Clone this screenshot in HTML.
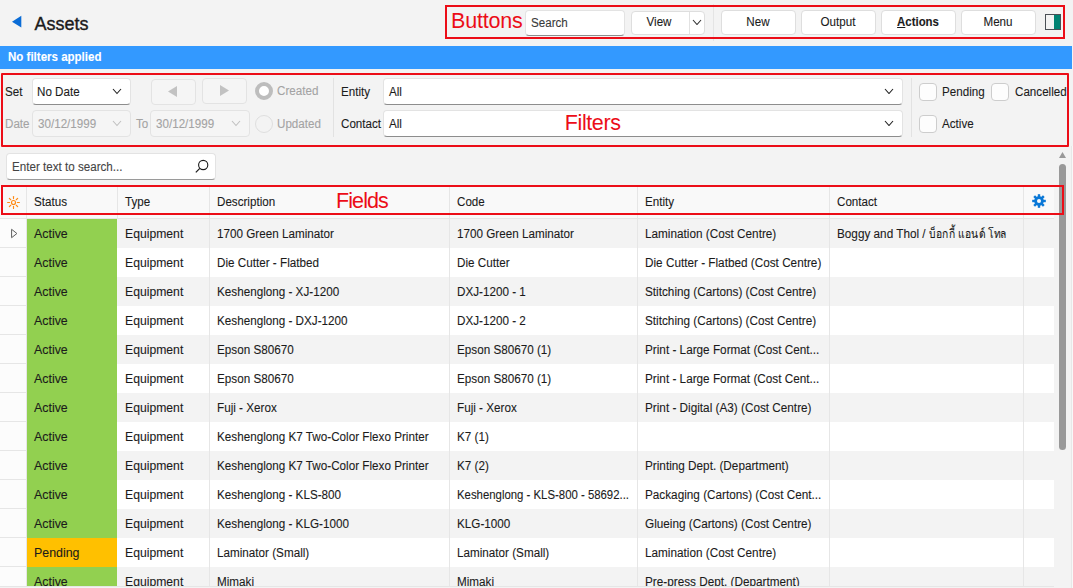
<!DOCTYPE html>
<html><head><meta charset="utf-8"><style>
html,body{margin:0;padding:0;width:1073px;height:588px;overflow:hidden;background:#f3f3f3;font-family:"Liberation Sans",sans-serif;}
.t{position:absolute;white-space:nowrap;-webkit-text-stroke:0.1px currentColor;}
.b{position:absolute;}
</style></head><body>
<svg class="b" style="left:11px;top:15px" width="12" height="14"><polygon points="1,6.8 10.3,0.8 10.3,12.6" fill="#0a6cd6"/></svg>
<div class="t" style="left:34.50px;top:13.70px;font-size:18px;line-height:20.7px;color:#1b1b1b;font-weight:normal;-webkit-text-stroke:0.35px #1b1b1b">Assets</div>
<div class="b" style="left:525px;top:9.5px;width:99.5px;height:26px;background:#fff;border:1px solid #e3e3e3;border-bottom:1px solid #8d8d8d;border-radius:4px;box-sizing:border-box"></div>
<div class="t" style="left:531.00px;top:15.68px;font-size:12.5px;line-height:14.37px;color:#3a3a3a;font-weight:normal;transform:scaleX(0.93);transform-origin:0 0;">Search</div>
<div class="b" style="left:630.5px;top:10.5px;width:74px;height:24px;background:#fff;border:1px solid #dedede;border-radius:4px;box-sizing:border-box"></div>
<div class="b" style="left:689px;top:11.5px;width:1px;height:22px;background:#e2e2e2"></div>
<div class="t" style="left:629.50px;top:14.68px;font-size:12.5px;line-height:14.37px;color:#1b1b1b;font-weight:normal;transform:scaleX(0.93);transform-origin:50% 0;width:58px;text-align:center">View</div>
<svg class="b" style="left:692.0px;top:18.75px" width="10" height="6.5"><polyline points="1,1 5.0,5.5 9,1" fill="none" stroke="#333" stroke-width="1.1"/></svg>
<div class="b" style="left:713px;top:4px;width:1px;height:37px;background:#e4e4e4"></div>
<div class="b" style="left:721px;top:10px;width:74.5px;height:24.5px;background:#fff;border:1px solid #dedede;border-radius:4px;box-sizing:border-box"></div>
<div class="t" style="left:721.00px;top:14.68px;font-size:12.5px;line-height:14.37px;color:#1b1b1b;font-weight:normal;transform:scaleX(0.93);transform-origin:50% 0;width:74px;text-align:center">New</div>
<div class="b" style="left:801px;top:10px;width:74.5px;height:24.5px;background:#fff;border:1px solid #dedede;border-radius:4px;box-sizing:border-box"></div>
<div class="t" style="left:801.00px;top:14.68px;font-size:12.5px;line-height:14.37px;color:#1b1b1b;font-weight:normal;transform:scaleX(0.93);transform-origin:50% 0;width:74px;text-align:center">Output</div>
<div class="b" style="left:881px;top:10px;width:74.5px;height:24.5px;background:#fff;border:1px solid #dedede;border-radius:4px;box-sizing:border-box"></div>
<div class="t" style="left:881.00px;top:16.13px;font-size:12px;line-height:13.8px;color:#1b1b1b;font-weight:bold;transform:scaleX(0.95);transform-origin:50% 0;width:74px;text-align:center"><u>A</u>ctions</div>
<div class="b" style="left:961px;top:10px;width:74.5px;height:24.5px;background:#fff;border:1px solid #dedede;border-radius:4px;box-sizing:border-box"></div>
<div class="t" style="left:961.00px;top:14.68px;font-size:12.5px;line-height:14.37px;color:#1b1b1b;font-weight:normal;transform:scaleX(0.93);transform-origin:50% 0;width:74px;text-align:center">Menu</div>
<div class="b" style="left:1045px;top:14px;width:16px;height:16px;border:1px solid #4a4f55;box-sizing:border-box;background:linear-gradient(90deg,#f3f3f3 0,#f3f3f3 8px,#008272 8px)"></div>
<div class="b" style="left:0px;top:46px;width:1072px;height:23px;background:#3399ff"></div>
<div class="t" style="left:7.50px;top:51.13px;font-size:12px;line-height:13.8px;color:#fff;font-weight:bold;transform:scaleX(0.96);transform-origin:0 0;">No filters applied</div>
<div class="t" style="left:5.00px;top:84.68px;font-size:12.5px;line-height:14.37px;color:#1b1b1b;font-weight:normal;transform:scaleX(0.93);transform-origin:0 0;">Set</div>
<div class="b" style="left:31.5px;top:78px;width:99px;height:26.5px;background:#fff;border:1px solid #e3e3e3;border-bottom:1px solid #8d8d8d;border-radius:4px;box-sizing:border-box"></div>
<div class="t" style="left:36.50px;top:84.68px;font-size:12.5px;line-height:14.37px;color:#1b1b1b;font-weight:normal;transform:scaleX(0.93);transform-origin:0 0;">No Date</div>
<svg class="b" style="left:112.0px;top:88.25px" width="10" height="6.5"><polyline points="1,1 5.0,5.5 9,1" fill="none" stroke="#222" stroke-width="1.1"/></svg>
<div class="b" style="left:151px;top:79px;width:45px;height:25.8px;background:#f5f5f5;border:1px solid #e3e3e3;border-radius:4px;box-sizing:border-box"></div>
<div class="b" style="left:202px;top:78px;width:45px;height:25.8px;background:#f5f5f5;border:1px solid #e3e3e3;border-radius:4px;box-sizing:border-box"></div>
<svg class="b" style="left:167px;top:85px" width="11" height="13"><polygon points="1,6.5 10,1 10,12" fill="#c2c2c2"/></svg>
<svg class="b" style="left:219px;top:84px" width="11" height="13"><polygon points="10,6.5 1,1 1,12" fill="#c2c2c2"/></svg>
<svg class="b" style="left:255px;top:82px" width="18" height="18"><circle cx="9" cy="9" r="7" fill="#fff" stroke="#bdbdbd" stroke-width="4"/></svg>
<div class="t" style="left:277.30px;top:84.18px;font-size:12.5px;line-height:14.37px;color:#a3a3a3;font-weight:normal;transform:scaleX(0.93);transform-origin:0 0;">Created</div>
<svg class="b" style="left:255px;top:115px" width="18" height="18"><circle cx="9" cy="9" r="8.5" fill="#f3f3f3" stroke="#dedede" stroke-width="1"/></svg>
<div class="t" style="left:277.30px;top:116.68px;font-size:12.5px;line-height:14.37px;color:#a3a3a3;font-weight:normal;transform:scaleX(0.93);transform-origin:0 0;">Updated</div>
<div class="t" style="left:5.00px;top:116.68px;font-size:12.5px;line-height:14.37px;color:#a3a3a3;font-weight:normal;transform:scaleX(0.93);transform-origin:0 0;">Date</div>
<div class="b" style="left:31.5px;top:110px;width:99px;height:26.5px;background:#f5f5f5;border:1px solid #e3e3e3;border-radius:4px;box-sizing:border-box"></div>
<div class="t" style="left:37.50px;top:116.68px;font-size:12.5px;line-height:14.37px;color:#a3a3a3;font-weight:normal;transform:scaleX(0.93);transform-origin:0 0;">30/12/1999</div>
<svg class="b" style="left:112.0px;top:120.25px" width="10" height="6.5"><polyline points="1,1 5.0,5.5 9,1" fill="none" stroke="#c0c0c0" stroke-width="1.1"/></svg>
<div class="t" style="left:135.50px;top:116.68px;font-size:12.5px;line-height:14.37px;color:#a3a3a3;font-weight:normal;transform:scaleX(0.93);transform-origin:0 0;">To</div>
<div class="b" style="left:150px;top:110px;width:100px;height:26.5px;background:#f5f5f5;border:1px solid #e3e3e3;border-radius:4px;box-sizing:border-box"></div>
<div class="t" style="left:156.00px;top:116.68px;font-size:12.5px;line-height:14.37px;color:#a3a3a3;font-weight:normal;transform:scaleX(0.93);transform-origin:0 0;">30/12/1999</div>
<svg class="b" style="left:231.0px;top:120.25px" width="10" height="6.5"><polyline points="1,1 5.0,5.5 9,1" fill="none" stroke="#c0c0c0" stroke-width="1.1"/></svg>
<div class="b" style="left:333px;top:78px;width:1px;height:59px;background:#e2e2e2"></div>
<div class="b" style="left:911px;top:78px;width:1px;height:59px;background:#e2e2e2"></div>
<div class="t" style="left:341.00px;top:84.68px;font-size:12.5px;line-height:14.37px;color:#1b1b1b;font-weight:normal;transform:scaleX(0.93);transform-origin:0 0;">Entity</div>
<div class="t" style="left:341.00px;top:116.68px;font-size:12.5px;line-height:14.37px;color:#1b1b1b;font-weight:normal;transform:scaleX(0.93);transform-origin:0 0;">Contact</div>
<div class="b" style="left:382.5px;top:78px;width:520px;height:26.5px;background:#fff;border:1px solid #e3e3e3;border-bottom:1px solid #8d8d8d;border-radius:4px;box-sizing:border-box"></div>
<div class="b" style="left:382.5px;top:110px;width:520px;height:26.5px;background:#fff;border:1px solid #e3e3e3;border-bottom:1px solid #8d8d8d;border-radius:4px;box-sizing:border-box"></div>
<div class="t" style="left:389.00px;top:84.68px;font-size:12.5px;line-height:14.37px;color:#1b1b1b;font-weight:normal;transform:scaleX(0.93);transform-origin:0 0;">All</div>
<div class="t" style="left:389.00px;top:116.68px;font-size:12.5px;line-height:14.37px;color:#1b1b1b;font-weight:normal;transform:scaleX(0.93);transform-origin:0 0;">All</div>
<svg class="b" style="left:884.0px;top:87.75px" width="10" height="6.5"><polyline points="1,1 5.0,5.5 9,1" fill="none" stroke="#222" stroke-width="1.1"/></svg>
<svg class="b" style="left:884.0px;top:119.75px" width="10" height="6.5"><polyline points="1,1 5.0,5.5 9,1" fill="none" stroke="#222" stroke-width="1.1"/></svg>
<div class="b" style="left:919px;top:83px;width:18px;height:17.6px;background:#fdfdfd;border:1px solid #cdcdcd;border-radius:4px;box-sizing:border-box"></div>
<div class="t" style="left:942.00px;top:84.68px;font-size:12.5px;line-height:14.37px;color:#1b1b1b;font-weight:normal;transform:scaleX(0.93);transform-origin:0 0;">Pending</div>
<div class="b" style="left:991px;top:83px;width:18px;height:17.6px;background:#fdfdfd;border:1px solid #cdcdcd;border-radius:4px;box-sizing:border-box"></div>
<div class="t" style="left:1014.50px;top:84.68px;font-size:12.5px;line-height:14.37px;color:#1b1b1b;font-weight:normal;transform:scaleX(0.93);transform-origin:0 0;">Cancelled</div>
<div class="b" style="left:919px;top:115px;width:18px;height:17.6px;background:#fdfdfd;border:1px solid #cdcdcd;border-radius:4px;box-sizing:border-box"></div>
<div class="t" style="left:942.00px;top:116.68px;font-size:12.5px;line-height:14.37px;color:#1b1b1b;font-weight:normal;transform:scaleX(0.93);transform-origin:0 0;">Active</div>
<div class="b" style="left:6px;top:153px;width:209.5px;height:27px;background:#fff;border:1px solid #e3e3e3;border-bottom:1px solid #9a9a9a;border-radius:4px;box-sizing:border-box"></div>
<div class="t" style="left:12.00px;top:159.68px;font-size:12.5px;line-height:14.37px;color:#444;font-weight:normal;transform:scaleX(0.93);transform-origin:0 0;">Enter text to search...</div>
<svg class="b" style="left:194px;top:159px" width="16" height="15"><circle cx="9.2" cy="6" r="4.6" fill="none" stroke="#1a1a1a" stroke-width="1.1"/><line x1="5.8" y1="9.4" x2="1.8" y2="13.4" stroke="#1a1a1a" stroke-width="1.2"/></svg>
<div class="b" style="left:0px;top:186px;width:1054px;height:32px;background:#f9f9f9"></div>
<div class="b" style="left:0px;top:218px;width:1054px;height:1px;background:#e6e6e6"></div>
<div class="b" style="left:26px;top:186px;width:1px;height:32px;background:#e6e6e6"></div>
<div class="b" style="left:117px;top:186px;width:1px;height:32px;background:#e6e6e6"></div>
<div class="b" style="left:209px;top:186px;width:1px;height:32px;background:#e6e6e6"></div>
<div class="b" style="left:449px;top:186px;width:1px;height:32px;background:#e6e6e6"></div>
<div class="b" style="left:637px;top:186px;width:1px;height:32px;background:#e6e6e6"></div>
<div class="b" style="left:829px;top:186px;width:1px;height:32px;background:#e6e6e6"></div>
<div class="b" style="left:1023px;top:186px;width:1px;height:32px;background:#e6e6e6"></div>
<div class="t" style="left:34.00px;top:194.68px;font-size:12.5px;line-height:14.37px;color:#1b1b1b;font-weight:normal;transform:scaleX(0.93);transform-origin:0 0;">Status</div>
<div class="t" style="left:125.00px;top:194.68px;font-size:12.5px;line-height:14.37px;color:#1b1b1b;font-weight:normal;transform:scaleX(0.93);transform-origin:0 0;">Type</div>
<div class="t" style="left:217.00px;top:194.68px;font-size:12.5px;line-height:14.37px;color:#1b1b1b;font-weight:normal;transform:scaleX(0.93);transform-origin:0 0;">Description</div>
<div class="t" style="left:457.00px;top:194.68px;font-size:12.5px;line-height:14.37px;color:#1b1b1b;font-weight:normal;transform:scaleX(0.93);transform-origin:0 0;">Code</div>
<div class="t" style="left:645.00px;top:194.68px;font-size:12.5px;line-height:14.37px;color:#1b1b1b;font-weight:normal;transform:scaleX(0.93);transform-origin:0 0;">Entity</div>
<div class="t" style="left:837.00px;top:194.68px;font-size:12.5px;line-height:14.37px;color:#1b1b1b;font-weight:normal;transform:scaleX(0.93);transform-origin:0 0;">Contact</div>
<svg class="b" style="left:6px;top:195px" width="15" height="15"><circle cx="7.5" cy="7.5" r="2" fill="none" stroke="#ff8a14" stroke-width="1.15"/><line x1="11.40" y1="7.50" x2="13.40" y2="7.50" stroke="#ff8a14" stroke-width="1.15" stroke-linecap="round"/><line x1="10.26" y1="10.26" x2="11.67" y2="11.67" stroke="#ff8a14" stroke-width="1.15" stroke-linecap="round"/><line x1="7.50" y1="11.40" x2="7.50" y2="13.40" stroke="#ff8a14" stroke-width="1.15" stroke-linecap="round"/><line x1="4.74" y1="10.26" x2="3.33" y2="11.67" stroke="#ff8a14" stroke-width="1.15" stroke-linecap="round"/><line x1="3.60" y1="7.50" x2="1.60" y2="7.50" stroke="#ff8a14" stroke-width="1.15" stroke-linecap="round"/><line x1="4.74" y1="4.74" x2="3.33" y2="3.33" stroke="#ff8a14" stroke-width="1.15" stroke-linecap="round"/><line x1="7.50" y1="3.60" x2="7.50" y2="1.60" stroke="#ff8a14" stroke-width="1.15" stroke-linecap="round"/><line x1="10.26" y1="4.74" x2="11.67" y2="3.33" stroke="#ff8a14" stroke-width="1.15" stroke-linecap="round"/></svg>
<svg class="b" style="left:1032px;top:194px" width="14" height="14"><circle cx="7" cy="7" r="4.8" fill="#0a78d7"/><rect x="5.8" y="0.2" width="2.4" height="3.5" fill="#0a78d7" transform="rotate(0 7 7)"/><rect x="5.8" y="0.2" width="2.4" height="3.5" fill="#0a78d7" transform="rotate(45 7 7)"/><rect x="5.8" y="0.2" width="2.4" height="3.5" fill="#0a78d7" transform="rotate(90 7 7)"/><rect x="5.8" y="0.2" width="2.4" height="3.5" fill="#0a78d7" transform="rotate(135 7 7)"/><rect x="5.8" y="0.2" width="2.4" height="3.5" fill="#0a78d7" transform="rotate(180 7 7)"/><rect x="5.8" y="0.2" width="2.4" height="3.5" fill="#0a78d7" transform="rotate(225 7 7)"/><rect x="5.8" y="0.2" width="2.4" height="3.5" fill="#0a78d7" transform="rotate(270 7 7)"/><rect x="5.8" y="0.2" width="2.4" height="3.5" fill="#0a78d7" transform="rotate(315 7 7)"/><circle cx="7" cy="7" r="2" fill="#f9f9f9"/></svg>
<div class="b" style="left:0;top:219px;width:1073px;height:367px;overflow:hidden">
<div class="b" style="left:0px;top:0px;width:26px;height:29px;background:#fcfcfc"></div>
<div class="b" style="left:0px;top:28px;width:26px;height:1px;background:#e6e6e6"></div>
<div class="b" style="left:27px;top:0px;width:90px;height:29px;background:#92d050"></div>
<div class="t" style="left:34.00px;top:7.68px;font-size:12.5px;line-height:14.37px;color:#1b1b1b;font-weight:normal;transform:scaleX(0.99);transform-origin:0 0;">Active</div>
<div class="t" style="left:125.00px;top:7.68px;font-size:12.5px;line-height:14.37px;color:#1b1b1b;font-weight:normal;transform:scaleX(0.975);transform-origin:0 0;">Equipment</div>
<div class="t" style="left:217.00px;top:7.68px;font-size:12.5px;line-height:14.37px;color:#1b1b1b;font-weight:normal;transform:scaleX(0.935);transform-origin:0 0;">1700 Green Laminator</div>
<div class="t" style="left:457.00px;top:7.68px;font-size:12.5px;line-height:14.37px;color:#1b1b1b;font-weight:normal;transform:scaleX(0.935);transform-origin:0 0;">1700 Green Laminator</div>
<div class="t" style="left:645.00px;top:7.68px;font-size:12.5px;line-height:14.37px;color:#1b1b1b;font-weight:normal;transform:scaleX(0.94);transform-origin:0 0;">Lamination (Cost Centre)</div>
<div class="t" style="left:837.00px;top:7.68px;font-size:12.5px;line-height:14.37px;color:#1b1b1b;font-weight:normal;transform:scaleX(0.94);transform-origin:0 0;">Boggy and Thol /</div>
<div class="b" style="left:27px;top:29px;width:1027px;height:29px;background:#fff"></div>
<div class="b" style="left:0px;top:29px;width:26px;height:29px;background:#fcfcfc"></div>
<div class="b" style="left:0px;top:57px;width:26px;height:1px;background:#e6e6e6"></div>
<div class="b" style="left:27px;top:29px;width:90px;height:29px;background:#92d050"></div>
<div class="t" style="left:34.00px;top:36.68px;font-size:12.5px;line-height:14.37px;color:#1b1b1b;font-weight:normal;transform:scaleX(0.99);transform-origin:0 0;">Active</div>
<div class="t" style="left:125.00px;top:36.68px;font-size:12.5px;line-height:14.37px;color:#1b1b1b;font-weight:normal;transform:scaleX(0.975);transform-origin:0 0;">Equipment</div>
<div class="t" style="left:217.00px;top:36.68px;font-size:12.5px;line-height:14.37px;color:#1b1b1b;font-weight:normal;transform:scaleX(0.935);transform-origin:0 0;">Die Cutter - Flatbed</div>
<div class="t" style="left:457.00px;top:36.68px;font-size:12.5px;line-height:14.37px;color:#1b1b1b;font-weight:normal;transform:scaleX(0.935);transform-origin:0 0;">Die Cutter</div>
<div class="t" style="left:645.00px;top:36.68px;font-size:12.5px;line-height:14.37px;color:#1b1b1b;font-weight:normal;transform:scaleX(0.94);transform-origin:0 0;">Die Cutter - Flatbed (Cost Centre)</div>
<div class="b" style="left:0px;top:58px;width:26px;height:29px;background:#fcfcfc"></div>
<div class="b" style="left:0px;top:86px;width:26px;height:1px;background:#e6e6e6"></div>
<div class="b" style="left:27px;top:58px;width:90px;height:29px;background:#92d050"></div>
<div class="t" style="left:34.00px;top:65.68px;font-size:12.5px;line-height:14.37px;color:#1b1b1b;font-weight:normal;transform:scaleX(0.99);transform-origin:0 0;">Active</div>
<div class="t" style="left:125.00px;top:65.68px;font-size:12.5px;line-height:14.37px;color:#1b1b1b;font-weight:normal;transform:scaleX(0.975);transform-origin:0 0;">Equipment</div>
<div class="t" style="left:217.00px;top:65.68px;font-size:12.5px;line-height:14.37px;color:#1b1b1b;font-weight:normal;transform:scaleX(0.935);transform-origin:0 0;">Keshenglong - XJ-1200</div>
<div class="t" style="left:457.00px;top:65.68px;font-size:12.5px;line-height:14.37px;color:#1b1b1b;font-weight:normal;transform:scaleX(0.935);transform-origin:0 0;">DXJ-1200 - 1</div>
<div class="t" style="left:645.00px;top:65.68px;font-size:12.5px;line-height:14.37px;color:#1b1b1b;font-weight:normal;transform:scaleX(0.94);transform-origin:0 0;">Stitching (Cartons) (Cost Centre)</div>
<div class="b" style="left:27px;top:87px;width:1027px;height:29px;background:#fff"></div>
<div class="b" style="left:0px;top:87px;width:26px;height:29px;background:#fcfcfc"></div>
<div class="b" style="left:0px;top:115px;width:26px;height:1px;background:#e6e6e6"></div>
<div class="b" style="left:27px;top:87px;width:90px;height:29px;background:#92d050"></div>
<div class="t" style="left:34.00px;top:94.68px;font-size:12.5px;line-height:14.37px;color:#1b1b1b;font-weight:normal;transform:scaleX(0.99);transform-origin:0 0;">Active</div>
<div class="t" style="left:125.00px;top:94.68px;font-size:12.5px;line-height:14.37px;color:#1b1b1b;font-weight:normal;transform:scaleX(0.975);transform-origin:0 0;">Equipment</div>
<div class="t" style="left:217.00px;top:94.68px;font-size:12.5px;line-height:14.37px;color:#1b1b1b;font-weight:normal;transform:scaleX(0.935);transform-origin:0 0;">Keshenglong - DXJ-1200</div>
<div class="t" style="left:457.00px;top:94.68px;font-size:12.5px;line-height:14.37px;color:#1b1b1b;font-weight:normal;transform:scaleX(0.935);transform-origin:0 0;">DXJ-1200 - 2</div>
<div class="t" style="left:645.00px;top:94.68px;font-size:12.5px;line-height:14.37px;color:#1b1b1b;font-weight:normal;transform:scaleX(0.94);transform-origin:0 0;">Stitching (Cartons) (Cost Centre)</div>
<div class="b" style="left:0px;top:116px;width:26px;height:29px;background:#fcfcfc"></div>
<div class="b" style="left:0px;top:144px;width:26px;height:1px;background:#e6e6e6"></div>
<div class="b" style="left:27px;top:116px;width:90px;height:29px;background:#92d050"></div>
<div class="t" style="left:34.00px;top:123.68px;font-size:12.5px;line-height:14.37px;color:#1b1b1b;font-weight:normal;transform:scaleX(0.99);transform-origin:0 0;">Active</div>
<div class="t" style="left:125.00px;top:123.68px;font-size:12.5px;line-height:14.37px;color:#1b1b1b;font-weight:normal;transform:scaleX(0.975);transform-origin:0 0;">Equipment</div>
<div class="t" style="left:217.00px;top:123.68px;font-size:12.5px;line-height:14.37px;color:#1b1b1b;font-weight:normal;transform:scaleX(0.935);transform-origin:0 0;">Epson S80670</div>
<div class="t" style="left:457.00px;top:123.68px;font-size:12.5px;line-height:14.37px;color:#1b1b1b;font-weight:normal;transform:scaleX(0.935);transform-origin:0 0;">Epson S80670 (1)</div>
<div class="t" style="left:645.00px;top:123.68px;font-size:12.5px;line-height:14.37px;color:#1b1b1b;font-weight:normal;transform:scaleX(0.94);transform-origin:0 0;">Print - Large Format (Cost Cent...</div>
<div class="b" style="left:27px;top:145px;width:1027px;height:29px;background:#fff"></div>
<div class="b" style="left:0px;top:145px;width:26px;height:29px;background:#fcfcfc"></div>
<div class="b" style="left:0px;top:173px;width:26px;height:1px;background:#e6e6e6"></div>
<div class="b" style="left:27px;top:145px;width:90px;height:29px;background:#92d050"></div>
<div class="t" style="left:34.00px;top:152.68px;font-size:12.5px;line-height:14.37px;color:#1b1b1b;font-weight:normal;transform:scaleX(0.99);transform-origin:0 0;">Active</div>
<div class="t" style="left:125.00px;top:152.68px;font-size:12.5px;line-height:14.37px;color:#1b1b1b;font-weight:normal;transform:scaleX(0.975);transform-origin:0 0;">Equipment</div>
<div class="t" style="left:217.00px;top:152.68px;font-size:12.5px;line-height:14.37px;color:#1b1b1b;font-weight:normal;transform:scaleX(0.935);transform-origin:0 0;">Epson S80670</div>
<div class="t" style="left:457.00px;top:152.68px;font-size:12.5px;line-height:14.37px;color:#1b1b1b;font-weight:normal;transform:scaleX(0.935);transform-origin:0 0;">Epson S80670 (1)</div>
<div class="t" style="left:645.00px;top:152.68px;font-size:12.5px;line-height:14.37px;color:#1b1b1b;font-weight:normal;transform:scaleX(0.94);transform-origin:0 0;">Print - Large Format (Cost Cent...</div>
<div class="b" style="left:0px;top:174px;width:26px;height:29px;background:#fcfcfc"></div>
<div class="b" style="left:0px;top:202px;width:26px;height:1px;background:#e6e6e6"></div>
<div class="b" style="left:27px;top:174px;width:90px;height:29px;background:#92d050"></div>
<div class="t" style="left:34.00px;top:181.68px;font-size:12.5px;line-height:14.37px;color:#1b1b1b;font-weight:normal;transform:scaleX(0.99);transform-origin:0 0;">Active</div>
<div class="t" style="left:125.00px;top:181.68px;font-size:12.5px;line-height:14.37px;color:#1b1b1b;font-weight:normal;transform:scaleX(0.975);transform-origin:0 0;">Equipment</div>
<div class="t" style="left:217.00px;top:181.68px;font-size:12.5px;line-height:14.37px;color:#1b1b1b;font-weight:normal;transform:scaleX(0.935);transform-origin:0 0;">Fuji - Xerox</div>
<div class="t" style="left:457.00px;top:181.68px;font-size:12.5px;line-height:14.37px;color:#1b1b1b;font-weight:normal;transform:scaleX(0.935);transform-origin:0 0;">Fuji - Xerox</div>
<div class="t" style="left:645.00px;top:181.68px;font-size:12.5px;line-height:14.37px;color:#1b1b1b;font-weight:normal;transform:scaleX(0.94);transform-origin:0 0;">Print - Digital (A3) (Cost Centre)</div>
<div class="b" style="left:27px;top:203px;width:1027px;height:29px;background:#fff"></div>
<div class="b" style="left:0px;top:203px;width:26px;height:29px;background:#fcfcfc"></div>
<div class="b" style="left:0px;top:231px;width:26px;height:1px;background:#e6e6e6"></div>
<div class="b" style="left:27px;top:203px;width:90px;height:29px;background:#92d050"></div>
<div class="t" style="left:34.00px;top:210.68px;font-size:12.5px;line-height:14.37px;color:#1b1b1b;font-weight:normal;transform:scaleX(0.99);transform-origin:0 0;">Active</div>
<div class="t" style="left:125.00px;top:210.68px;font-size:12.5px;line-height:14.37px;color:#1b1b1b;font-weight:normal;transform:scaleX(0.975);transform-origin:0 0;">Equipment</div>
<div class="t" style="left:217.00px;top:210.68px;font-size:12.5px;line-height:14.37px;color:#1b1b1b;font-weight:normal;transform:scaleX(0.935);transform-origin:0 0;">Keshenglong K7 Two-Color Flexo Printer</div>
<div class="t" style="left:457.00px;top:210.68px;font-size:12.5px;line-height:14.37px;color:#1b1b1b;font-weight:normal;transform:scaleX(0.935);transform-origin:0 0;">K7 (1)</div>
<div class="b" style="left:0px;top:232px;width:26px;height:29px;background:#fcfcfc"></div>
<div class="b" style="left:0px;top:260px;width:26px;height:1px;background:#e6e6e6"></div>
<div class="b" style="left:27px;top:232px;width:90px;height:29px;background:#92d050"></div>
<div class="t" style="left:34.00px;top:239.68px;font-size:12.5px;line-height:14.37px;color:#1b1b1b;font-weight:normal;transform:scaleX(0.99);transform-origin:0 0;">Active</div>
<div class="t" style="left:125.00px;top:239.68px;font-size:12.5px;line-height:14.37px;color:#1b1b1b;font-weight:normal;transform:scaleX(0.975);transform-origin:0 0;">Equipment</div>
<div class="t" style="left:217.00px;top:239.68px;font-size:12.5px;line-height:14.37px;color:#1b1b1b;font-weight:normal;transform:scaleX(0.935);transform-origin:0 0;">Keshenglong K7 Two-Color Flexo Printer</div>
<div class="t" style="left:457.00px;top:239.68px;font-size:12.5px;line-height:14.37px;color:#1b1b1b;font-weight:normal;transform:scaleX(0.935);transform-origin:0 0;">K7 (2)</div>
<div class="t" style="left:645.00px;top:239.68px;font-size:12.5px;line-height:14.37px;color:#1b1b1b;font-weight:normal;transform:scaleX(0.94);transform-origin:0 0;">Printing Dept. (Department)</div>
<div class="b" style="left:27px;top:261px;width:1027px;height:29px;background:#fff"></div>
<div class="b" style="left:0px;top:261px;width:26px;height:29px;background:#fcfcfc"></div>
<div class="b" style="left:0px;top:289px;width:26px;height:1px;background:#e6e6e6"></div>
<div class="b" style="left:27px;top:261px;width:90px;height:29px;background:#92d050"></div>
<div class="t" style="left:34.00px;top:268.68px;font-size:12.5px;line-height:14.37px;color:#1b1b1b;font-weight:normal;transform:scaleX(0.99);transform-origin:0 0;">Active</div>
<div class="t" style="left:125.00px;top:268.68px;font-size:12.5px;line-height:14.37px;color:#1b1b1b;font-weight:normal;transform:scaleX(0.975);transform-origin:0 0;">Equipment</div>
<div class="t" style="left:217.00px;top:268.68px;font-size:12.5px;line-height:14.37px;color:#1b1b1b;font-weight:normal;transform:scaleX(0.935);transform-origin:0 0;">Keshenglong - KLS-800</div>
<div class="t" style="left:457.00px;top:268.68px;font-size:12.5px;line-height:14.37px;color:#1b1b1b;font-weight:normal;transform:scaleX(0.91);transform-origin:0 0;">Keshenglong - KLS-800 - 58692...</div>
<div class="t" style="left:645.00px;top:268.68px;font-size:12.5px;line-height:14.37px;color:#1b1b1b;font-weight:normal;transform:scaleX(0.94);transform-origin:0 0;">Packaging (Cartons) (Cost Cent...</div>
<div class="b" style="left:0px;top:290px;width:26px;height:29px;background:#fcfcfc"></div>
<div class="b" style="left:0px;top:318px;width:26px;height:1px;background:#e6e6e6"></div>
<div class="b" style="left:27px;top:290px;width:90px;height:29px;background:#92d050"></div>
<div class="t" style="left:34.00px;top:297.68px;font-size:12.5px;line-height:14.37px;color:#1b1b1b;font-weight:normal;transform:scaleX(0.99);transform-origin:0 0;">Active</div>
<div class="t" style="left:125.00px;top:297.68px;font-size:12.5px;line-height:14.37px;color:#1b1b1b;font-weight:normal;transform:scaleX(0.975);transform-origin:0 0;">Equipment</div>
<div class="t" style="left:217.00px;top:297.68px;font-size:12.5px;line-height:14.37px;color:#1b1b1b;font-weight:normal;transform:scaleX(0.935);transform-origin:0 0;">Keshenglong - KLG-1000</div>
<div class="t" style="left:457.00px;top:297.68px;font-size:12.5px;line-height:14.37px;color:#1b1b1b;font-weight:normal;transform:scaleX(0.935);transform-origin:0 0;">KLG-1000</div>
<div class="t" style="left:645.00px;top:297.68px;font-size:12.5px;line-height:14.37px;color:#1b1b1b;font-weight:normal;transform:scaleX(0.94);transform-origin:0 0;">Glueing (Cartons) (Cost Centre)</div>
<div class="b" style="left:27px;top:319px;width:1027px;height:29px;background:#fff"></div>
<div class="b" style="left:0px;top:319px;width:26px;height:29px;background:#fcfcfc"></div>
<div class="b" style="left:0px;top:347px;width:26px;height:1px;background:#e6e6e6"></div>
<div class="b" style="left:27px;top:319px;width:90px;height:29px;background:#ffc000"></div>
<div class="t" style="left:34.00px;top:326.68px;font-size:12.5px;line-height:14.37px;color:#1b1b1b;font-weight:normal;transform:scaleX(0.99);transform-origin:0 0;">Pending</div>
<div class="t" style="left:125.00px;top:326.68px;font-size:12.5px;line-height:14.37px;color:#1b1b1b;font-weight:normal;transform:scaleX(0.975);transform-origin:0 0;">Equipment</div>
<div class="t" style="left:217.00px;top:326.68px;font-size:12.5px;line-height:14.37px;color:#1b1b1b;font-weight:normal;transform:scaleX(0.935);transform-origin:0 0;">Laminator (Small)</div>
<div class="t" style="left:457.00px;top:326.68px;font-size:12.5px;line-height:14.37px;color:#1b1b1b;font-weight:normal;transform:scaleX(0.935);transform-origin:0 0;">Laminator (Small)</div>
<div class="t" style="left:645.00px;top:326.68px;font-size:12.5px;line-height:14.37px;color:#1b1b1b;font-weight:normal;transform:scaleX(0.94);transform-origin:0 0;">Lamination (Cost Centre)</div>
<div class="b" style="left:0px;top:348px;width:26px;height:29px;background:#fcfcfc"></div>
<div class="b" style="left:0px;top:376px;width:26px;height:1px;background:#e6e6e6"></div>
<div class="b" style="left:27px;top:348px;width:90px;height:29px;background:#92d050"></div>
<div class="t" style="left:34.00px;top:355.68px;font-size:12.5px;line-height:14.37px;color:#1b1b1b;font-weight:normal;transform:scaleX(0.99);transform-origin:0 0;">Active</div>
<div class="t" style="left:125.00px;top:355.68px;font-size:12.5px;line-height:14.37px;color:#1b1b1b;font-weight:normal;transform:scaleX(0.975);transform-origin:0 0;">Equipment</div>
<div class="t" style="left:217.00px;top:355.68px;font-size:12.5px;line-height:14.37px;color:#1b1b1b;font-weight:normal;transform:scaleX(0.935);transform-origin:0 0;">Mimaki</div>
<div class="t" style="left:457.00px;top:355.68px;font-size:12.5px;line-height:14.37px;color:#1b1b1b;font-weight:normal;transform:scaleX(0.935);transform-origin:0 0;">Mimaki</div>
<div class="t" style="left:645.00px;top:355.68px;font-size:12.5px;line-height:14.37px;color:#1b1b1b;font-weight:normal;transform:scaleX(0.94);transform-origin:0 0;">Pre-press Dept. (Department)</div>
<div class="t" style="left:929.00px;top:7.68px;font-size:12.5px;line-height:14.37px;color:#1b1b1b;font-weight:normal;transform:scaleX(0.82);transform-origin:0 0;">บ็อกกี้ แอนด์ โทล</div>
<div class="b" style="left:26px;top:0px;width:1px;height:367px;background:#e6e6e6"></div>
<div class="b" style="left:209px;top:0px;width:1px;height:367px;background:#e6e6e6"></div>
<div class="b" style="left:449px;top:0px;width:1px;height:367px;background:#e6e6e6"></div>
<div class="b" style="left:637px;top:0px;width:1px;height:367px;background:#e6e6e6"></div>
<div class="b" style="left:829px;top:0px;width:1px;height:367px;background:#e6e6e6"></div>
<div class="b" style="left:1023px;top:0px;width:1px;height:367px;background:#e6e6e6"></div>
<svg class="b" style="left:10px;top:9px" width="8" height="11"><polygon points="1.6,1.3 6.9,5.5 1.6,9.7" fill="none" stroke="#5e5e5e" stroke-width="1"/></svg>
</div>
<div class="b" style="left:0px;top:586px;width:1054px;height:1px;background:#e6e6e6"></div>
<svg class="b" style="left:1058px;top:151px" width="9" height="8"><polygon points="4.5,1 8,7 1,7" fill="#999"/></svg>
<div class="b" style="left:1059px;top:164px;width:7px;height:286px;background:#999;border-radius:3.5px"></div>
<div class="b" style="left:1071px;top:146px;width:1px;height:442px;background:#e8e8e8"></div>
<div class="b" style="left:1072px;top:146px;width:1px;height:442px;background:#f8f8f8"></div>
<div class="b" style="left:445px;top:5px;width:620px;height:33.5px;border:2px solid #ec0d17;box-sizing:border-box"></div>
<div class="t" style="left:451.00px;top:8.53px;font-size:21.5px;line-height:24.72px;color:#ec0d17;font-weight:normal;letter-spacing:-0.2px;-webkit-text-stroke:0">Buttons</div>
<div class="b" style="left:1px;top:73px;width:1068px;height:74px;border:2px solid #ec0d17;box-sizing:border-box;border-radius:1px"></div>
<div class="t" style="left:564.80px;top:111.03px;font-size:21.5px;line-height:24.72px;color:#ec0d17;font-weight:normal;letter-spacing:-0.4px;-webkit-text-stroke:0">Filters</div>
<div class="b" style="left:1px;top:185px;width:1062.5px;height:30px;border:2px solid #ec0d17;box-sizing:border-box"></div>
<div class="t" style="left:336.00px;top:188.93px;font-size:21.5px;line-height:24.72px;color:#ec0d17;font-weight:normal;letter-spacing:-0.9px;-webkit-text-stroke:0">Fields</div>
</body></html>
